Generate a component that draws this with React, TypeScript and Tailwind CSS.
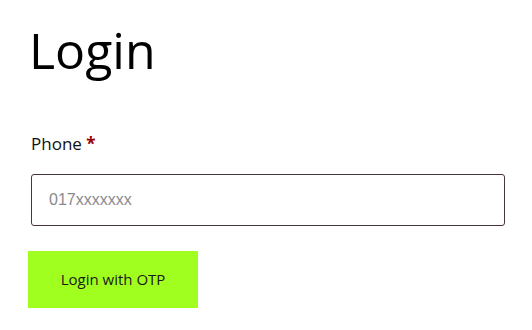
import React, { useState } from 'react';

const App = () => {
  const [phone, setPhone] = useState('');

  return (
    <div className="min-h-screen bg-white" style={{ fontFamily: '"Segoe UI", "Open Sans", sans-serif' }}>
      <div className="px-[28px] pt-[16px]">
        <h1 className="pl-[1px] text-[50px] leading-[68px] text-black">Login</h1>
        <form className="mt-[48px]" onSubmit={(e) => e.preventDefault()}>
          <label className="block pl-[3px] text-[17px] leading-[24px] text-[#111]">
            Phone <span className="font-bold text-[#9b0000]">*</span>
          </label>
          <input
            type="text"
            value={phone}
            onChange={(e) => setPhone(e.target.value)}
            placeholder="017xxxxxxx"
            className="mt-[18px] ml-[3px] block h-[52px] w-[474px] rounded-[3px] border border-[#4a3636] px-[17px] text-[16px] text-black placeholder:text-[#8a8a8a] focus:outline-none"
            style={{ fontFamily: '"Liberation Sans", Arial, sans-serif' }}
          />
          <button
            type="submit"
            className="mt-[25px] h-[57px] w-[170px] bg-[#a0ff1f] text-[15px] text-[#1a1a1a]"
          >
            Login with OTP
          </button>
        </form>
      </div>
    </div>
  );
};

export default App;
